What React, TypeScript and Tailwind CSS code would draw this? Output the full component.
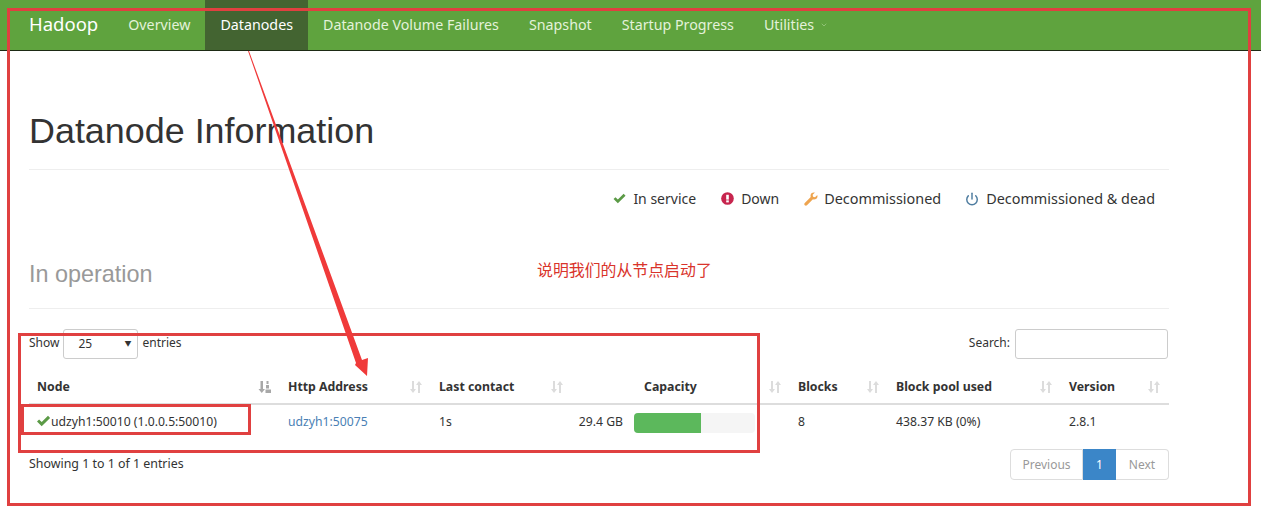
import { Power, ChevronDown } from 'lucide-react';

const navItems = ['Overview', 'Datanodes', 'Datanode Volume Failures', 'Snapshot', 'Startup Progress'];

function CheckIcon({ className }: { className: string }) {
  return (
    <svg viewBox="0 0 14 12" className={className} fill="currentColor">
      <path d="M0.5 6.5 L2.6 4.5 L5.2 7.1 L11.5 0.8 L13.6 2.9 L5.2 11.3 Z" />
    </svg>
  );
}

function DownIcon({ className }: { className: string }) {
  return (
    <svg viewBox="0 0 14 14" className={className}>
      <circle cx="7" cy="7" r="6.8" fill="currentColor" />
      <rect x="5.6" y="3" width="2.8" height="5.2" fill="#fff" />
      <rect x="5.6" y="9" width="2.8" height="2.2" fill="#fff" />
    </svg>
  );
}

function WrenchIcon({ className }: { className: string }) {
  return (
    <svg viewBox="0 0 16 16" className={className} fill="currentColor">
      <path d="M15.2 3.4 L12.6 6 L10.3 5.4 L9.9 3.2 L12.5 0.7 C10.4 0 8.2 1 7.6 3 C7.3 3.9 7.4 4.9 7.7 5.7 L0.9 12.6 C0.1 13.4 0.2 14.5 0.9 15.1 C1.6 15.8 2.7 15.8 3.4 15.1 L10.2 8.2 C11 8.6 12 8.7 12.9 8.4 C14.9 7.8 15.9 5.5 15.2 3.4 Z" />
    </svg>
  );
}

function SortIcon({ active }: { active?: boolean }) {
  if (active) {
    return (
      <svg viewBox="0 0 14 14" className="h-[14px] w-[14px] text-[#a8a8a8]" fill="currentColor">
        <path d="M2.500 1h2.500v8h2l-3.250 4-3.250-4h2z" />
        <path d="M8.500 1h2v3h-2zM8 5h3v3.500H8zM7.500 9.500h5.500V13H7.500z" />
      </svg>
    );
  }
  return (
    <svg viewBox="0 0 14 14" className="h-[14px] w-[14px] text-[#dcdcdc]" fill="currentColor">
      <path d="M3 1h2v8h2l-3 4-3-4h2z" />
      <path d="M9 13h2V5h2l-3-4-3 4h2z" />
    </svg>
  );
}

const columns = [
  { label: 'Node', width: 'w-[251px]', active: true },
  { label: 'Http Address', width: 'w-[151px]' },
  { label: 'Last contact', width: 'w-[141px]' },
  { label: 'Capacity', width: 'w-[218px]', center: true },
  { label: 'Blocks', width: 'w-[98px]' },
  { label: 'Block pool used', width: 'w-[173px]' },
  { label: 'Version', width: 'w-[108px]' },
];

export default function App() {
  return (
    <div className="relative h-[513px] w-[1261px] overflow-hidden bg-white font-['Noto_Sans','Noto_Sans_CJK_SC',sans-serif] text-[13px] text-[#333]">
      {/* Navbar */}
      <nav className="flex h-[51px] items-stretch border-b border-[#1d2a14] bg-[#5fa33e] pl-[14px]">
        <span className="flex items-center px-[15px] pb-[2px] text-[18.5px] text-white">Hadoop</span>
        {navItems.map((item) => (
          <a
            key={item}
            className={
              item === 'Datanodes'
                ? 'flex items-center bg-[#436431] px-[15px] text-[14.25px] text-white'
                : 'flex items-center px-[15px] text-[14.25px] text-[#e4f2da]'
            }
          >
            {item}
          </a>
        ))}
        <a className="flex items-center gap-[6px] px-[15px] text-[14.25px] text-[#e4f2da]">
          Utilities
          <ChevronDown className="h-2 w-2 text-[#8fc274]" strokeWidth={3} />
        </a>
      </nav>

      <main className="mx-[29px] w-[1140px]">
        <div className="mt-[58px] border-b border-[#eee] pb-[16px]">
          <h1 className="font-['Liberation_Sans',sans-serif] text-[35.9px] leading-[44px] text-[#333]">Datanode Information</h1>
        </div>

        {/* Legend */}
        <div className="mr-[14px] mt-[19px] flex h-[20px] items-center justify-end text-[14.4px]">
          <span className="mb-[2px] flex items-center gap-[7px] text-[14px]">
            <CheckIcon className="h-[11px] w-[13px] text-[#5b9a46]" />
            In service
          </span>
          <span className="mb-[2px] ml-[25px] flex items-center gap-[7px] text-[14px]">
            <DownIcon className="h-[13px] w-[13px] text-[#c7254e]" />
            Down
          </span>
          <span className="ml-[25px] flex items-center gap-[6px]">
            <WrenchIcon className="h-[14px] w-[14px] text-[#eea44f]" />
            Decommissioned
          </span>
          <span className="ml-[24px] flex items-center gap-[7px]">
            <Power className="h-[14px] w-[14px] text-[#4f7da0]" strokeWidth={2.5} />
            Decommissioned &amp; dead
          </span>
        </div>

        <div className="mt-[50px] border-b border-[#eee] pb-[19px]">
          <h2 className="font-['Liberation_Sans',sans-serif] text-[23.400px] leading-[30px] text-[#999]">In operation</h2>
        </div>

        {/* Table controls */}
        <div className="mt-[20px] flex h-[30px] items-start justify-between text-[12px]">
          <div className="flex items-start gap-[4px]">
            <span className="leading-[28px]">Show</span>
            <div className="flex h-[30px] w-[75px] items-center justify-between rounded-[3px] border border-[#ccc] pl-[14px] pr-[6px]">
              25
              <span className="text-[7px] text-[#333]">▼</span>
            </div>
            <span className="leading-[28px]">entries</span>
          </div>
          <div className="flex items-start gap-[5px] pr-px">
            <span className="leading-[28px]">Search:</span>
            <div className="h-[30px] w-[153px] rounded-[3px] border border-[#ccc]" />
          </div>
        </div>

        <table className="mt-[10px] w-[1140px] table-fixed border-collapse text-[12.2px]">
          <thead>
            <tr className="border-b-2 border-[#ddd]">
              {columns.map((col) => (
                <th key={col.label} className={`${col.width} h-[35px] p-0 pl-[8px] pt-[2px] text-[12.3px] font-bold text-[#333]`}>
                  <div className="flex items-center justify-between pr-[8px]">
                    <span className={col.center ? 'ml-[64px]' : ''}>{col.label}</span>
                    <SortIcon active={col.active} />
                  </div>
                </th>
              ))}
            </tr>
          </thead>
          <tbody>
            <tr className="h-[34px]">
              <td className="p-0 pl-[7px] pt-[2px]">
                <span className="flex items-center">
                  <CheckIcon className="mb-[2px] h-[12px] w-[15px] text-[#5b9a46]" />
                  udzyh1:50010 (1.0.0.5:50010)
                </span>
              </td>
              <td className="p-0 pl-[8px] pt-[2px] text-[#4a7fb5]">udzyh1:50075</td>
              <td className="p-0 pl-[8px] pt-[2px]">1s</td>
              <td className="p-0 pt-[2px]">
                <div className="flex items-center">
                  <span className="w-[51px] text-right">29.4 GB</span>
                  <div className="ml-[11px] flex h-[20px] w-[121px] overflow-hidden rounded-[4px] bg-[#f5f5f5]">
                    <div className="h-full w-[67px] bg-[#5cb85c]" />
                  </div>
                </div>
              </td>
              <td className="p-0 pl-[8px] pt-[2px]">8</td>
              <td className="p-0 pl-[8px] pt-[2px]">438.37 KB (0%)</td>
              <td className="p-0 pl-[8px] pt-[2px]">2.8.1</td>
            </tr>
          </tbody>
        </table>

        {/* Footer */}
        <div className="mt-[11px] flex items-start justify-between text-[12px]">
          <span className="mt-[6px] text-[12.4px] leading-[18px]">Showing 1 to 1 of 1 entries</span>
          <div className="flex h-[31px] text-[#999]">
            <span className="flex w-[73px] items-center justify-center rounded-l-[4px] border border-[#ddd]">Previous</span>
            <span className="flex w-[33px] items-center justify-center bg-[#3b86c8] text-white">1</span>
            <span className="flex w-[53px] items-center justify-center rounded-r-[4px] border border-[#ddd] border-l-0">Next</span>
          </div>
        </div>
      </main>

      {/* Annotations drawn over the page */}
      <div className="absolute left-[7px] top-[8px] h-[498px] w-[1244px] border-[3px] border-[#e04040]" />
      <div className="absolute left-[18px] top-[333px] h-[120px] w-[742px] border-[3px] border-[#e04040]" />
      <div className="absolute left-[21px] top-[404px] h-[31px] w-[230px] border-[3px] border-[#e04040]" />
      <span className="absolute left-[537px] top-[259px] font-['Noto_Sans_CJK_SC',sans-serif] text-[15.9px] leading-[22px] text-[#d9342b]">说明我们的从节点启动了</span>
      <svg className="pointer-events-none absolute left-0 top-0" width="1261" height="513" viewBox="0 0 1261 513">
        <polygon points="248,51 249,51 362,360 368,358 367,376 355,365 356,363" fill="#f03a3a" />
      </svg>
    </div>
  );
}
